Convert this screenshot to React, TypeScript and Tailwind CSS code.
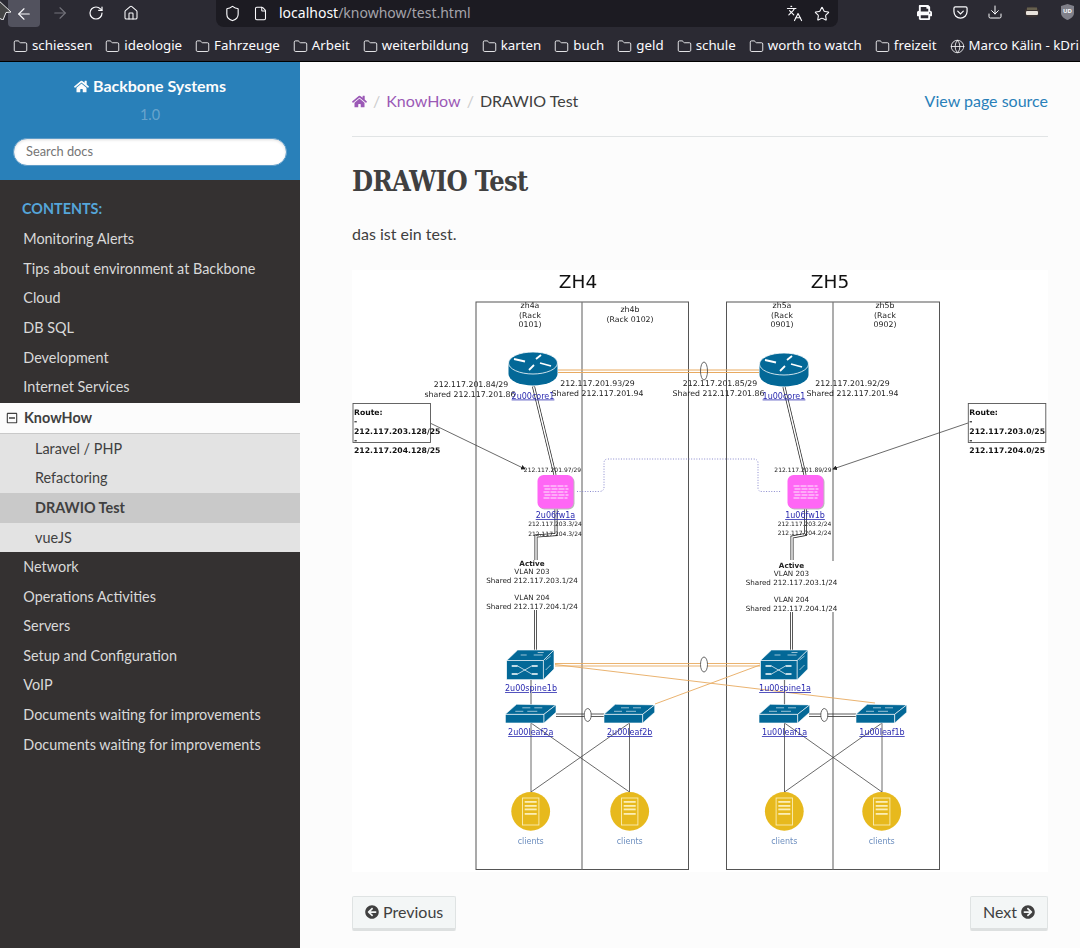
import React from "react"
import { ArrowLeft, ArrowRight, Download, File, Folder, Globe, Home, Languages, RotateCw, Shield, Star } from "lucide-react"
import { FaArrowCircleLeft, FaArrowCircleRight, FaHome, FaPrint, FaRegMinusSquare } from "react-icons/fa"

const bookmarks = ["schiessen", "ideologie", "Fahrzeuge", "Arbeit", "weiterbildung", "karten", "buch", "geld", "schule", "worth to watch", "freizeit"]

const menuTop = ["Monitoring Alerts", "Tips about environment at Backbone", "Cloud", "DB SQL", "Development", "Internet Services"]
const menuSub = ["Laravel / PHP", "Refactoring", "DRAWIO Test", "vueJS"]
const menuBottom = ["Network", "Operations Activities", "Servers", "Setup and Configuration", "VoIP", "Documents waiting for improvements", "Documents waiting for improvements"]

const BLUE = "#036897"
const LINE = "#555555"
const ORANGE = "#e8aa60"

function Label({ x, y, size = 7.8, bold, fill = "#222", children }: { x: number; y: number; size?: number; bold?: boolean; fill?: string; children: React.ReactNode }) {
  return (
    <text x={x} y={y} fontSize={size} fontWeight={bold ? 700 : 400} fill={fill} textAnchor="middle">
      {children}
    </text>
  )
}

function NodeLink({ x, y, size = 8, children }: { x: number; y: number; size?: number; children: React.ReactNode }) {
  return (
    <text x={x} y={y} fontSize={size} fill="#2a2ab0" textAnchor="middle" textDecoration="underline">
      {children}
    </text>
  )
}

function DoubleLine({ d, color = "#222" }: { d: string; color?: string }) {
  return (
    <g fill="none">
      <path d={d} stroke={color} strokeWidth={3} />
      <path d={d} stroke="#fff" strokeWidth={1.5} />
    </g>
  )
}

function Router({ cx, y }: { cx: number; y: number }) {
  const cy = y + 11
  return (
    <g>
      <path d={`M${cx - 24.5} ${cy} v11 a24.5 11.5 0 0 0 49 0 v-11 z`} fill={BLUE} />
      <ellipse cx={cx} cy={cy} rx={24.5} ry={11} fill={BLUE} stroke="#fff" strokeWidth={0.8} />
      <g stroke="#fff" strokeWidth={1.8} fill="#fff">
        <path d={`M${cx - 19} ${cy - 4} l11 2.5`} />
        <path d={`M${cx - 4} ${cy + 7} l5 -5`} />
        <path d={`M${cx + 18} ${cy + 3} l-11 -3`} />
        <path d={`M${cx + 8} ${cy - 8} l-5 4`} />
      </g>
    </g>
  )
}

function Firewall({ x, y }: { x: number; y: number }) {
  return (
    <g>
      <rect x={x + 1} y={y + 1} width={36} height={33.5} rx={6} fill="#bbbbbb" />
      <rect x={x} y={y} width={36} height={33.5} rx={6} fill="#ff66f5" />
      <g stroke="#fff" strokeWidth={0.9} strokeDasharray="6 1">
        {[11, 14, 17, 20, 23].map((dy, i) => (
          <path key={dy} d={`M${x + 6 + (i % 2)} ${y + dy} h24`} />
        ))}
      </g>
    </g>
  )
}

function Spine({ x, y }: { x: number; y: number }) {
  return (
    <g stroke="#fff" strokeWidth={0.6} fill={BLUE}>
      <path d={`M${x} ${y + 10.5} L${x + 11} ${y} H${x + 47.3} L${x + 36.7} ${y + 10.5} Z`} />
      <rect x={x} y={y + 10.5} width={36.7} height={19.2} />
      <path d={`M${x + 36.7} ${y + 10.5} L${x + 47.3} ${y} V${y + 19} L${x + 36.7} ${y + 29.7} Z`} />
      <path d={`M${x + 11} ${y + 16} l14 8 M${x + 11} ${y + 24} l14 -8`} fill="none" strokeWidth={0.7} />
      <path d={`M${x + 5} ${y + 16} h6 M${x + 25} ${y + 16} h6 M${x + 5} ${y + 24} h6 M${x + 25} ${y + 24} h6`} fill="none" strokeWidth={1.6} />
      <path d={`M${x + 14} ${y + 5} h6 M${x + 27} ${y + 5} h9 M${x + 31} ${y + 2.500} h6 M${x + 39} ${y + 10} l5 -4 M${x + 39} ${y + 20} l5 -5`} fill="none" />
    </g>
  )
}

function Leaf({ x, y }: { x: number; y: number }) {
  return (
    <g stroke="#fff" strokeWidth={0.6} fill={BLUE}>
      <path d={`M${x} ${y + 10} L${x + 11.3} ${y} L${x + 50.7} ${y + 0.6} L${x + 38.7} ${y + 10} Z`} />
      <rect x={x} y={y + 10} width={38.7} height={8.7} />
      <path d={`M${x + 38.7} ${y + 10} L${x + 50.7} ${y + 0.6} V${y + 8} L${x + 38.7} ${y + 18.7} Z`} />
      <path d={`M${x + 10} ${y + 7} h8 M${x + 22} ${y + 7} h10 M${x + 17} ${y + 3.5} h8 M${x + 29} ${y + 3.5} h8`} fill="none" />
    </g>
  )
}

function Client({ cx }: { cx: number }) {
  return (
    <g>
      <circle cx={cx} cy={811.3} r={19.4} fill="#e7b91d" />
      <rect x={cx - 8.2} y={798} width={16.4} height={27} fill="none" stroke="#fbeeb5" strokeWidth={0.9} />
      {[801, 805, 808.5, 813].map((y) => (
        <rect key={y} x={cx - 6} y={y} width={12} height={1.8} fill="#fbeeb5" />
      ))}
      <text x={cx} y={844} fontSize={8} fill="#6c8ebf" textAnchor="middle">clients</text>
    </g>
  )
}

function RouteBox({ x, lines }: { x: number; lines: string[] }) {
  return (
    <g>
      <rect x={x} y={403.5} width={77.5} height={39} fill="#fff" stroke={LINE} strokeWidth={0.9} />
      <g fontSize={7.7} fontWeight={700} fill="#111">
        <text x={x + 1} y={414.5}>Route:</text>
        <text x={x + 1} y={424}>-</text>
        <text x={x + 1} y={433.5}>{lines[0]}</text>
        <text x={x + 1} y={443}>-</text>
        <text x={x + 1} y={452.5}>{lines[1]}</text>
      </g>
    </g>
  )
}

function Diagram() {
  return (
    <svg viewBox="352 270 696 602" className="block h-[602px] w-[696px] bg-white font-['DejaVu_Sans',sans-serif] blur-[0.3px]">
      <defs>
        <marker id="arrow" markerWidth="6" markerHeight="6" refX="5" refY="3" orient="auto">
          <path d="M0 0 L6 3 L0 6 Z" fill="#222" />
        </marker>
      </defs>

      <Label x={578} y={288} size={18.5} fill="#111">ZH4</Label>
      <Label x={830} y={288} size={18.5} fill="#111">ZH5</Label>

      {/* racks */}
      <g fill="none" stroke={LINE} strokeWidth={1}>
        <rect x={476} y={302} width={212.5} height={567.5} />
        <rect x={726.5} y={302} width={213} height={567.5} />
        <path d="M582 302 V869.5 M833 302 V561 M833 612 V869.5" stroke="#777" strokeWidth={1.2} />
      </g>

      <Label x={530} y={308}>zh4a</Label>
      <Label x={530} y={317.5}>(Rack</Label>
      <Label x={530} y={327}>0101)</Label>
      <Label x={630} y={312}>zh4b</Label>
      <Label x={630} y={321.5}>(Rack 0102)</Label>
      <Label x={782} y={308}>zh5a</Label>
      <Label x={782} y={317.5}>(Rack</Label>
      <Label x={782} y={327}>0901)</Label>
      <Label x={885} y={308}>zh5b</Label>
      <Label x={885} y={317.5}>(Rack</Label>
      <Label x={885} y={327}>0902)</Label>

      {/* core links */}
      <path d="M558 370 H759 M558 372.5 H759" stroke={ORANGE} strokeWidth={1} fill="none" />
      <ellipse cx={704} cy={371} rx={3.5} ry={9} fill="none" stroke="#444" strokeWidth={0.8} />
      <DoubleLine d="M533.5 386.5 L555 475" />
      <DoubleLine d="M784 387 L805 475" />

      {/* route arrows */}
      <path d="M431 423.5 L525 469" stroke="#444" strokeWidth={0.8} markerEnd="url(#arrow)" />
      <path d="M968 423 L833 469" stroke="#444" strokeWidth={0.8} markerEnd="url(#arrow)" />

      {/* heartbeat */}
      <path d="M577 491.5 H599 Q604 491.5 604 487 V463 Q604 459 608 459 H753 Q758 459 758 463 V488 Q758 491.5 762 491.5 H781" fill="none" stroke="#7d7dc8" strokeWidth={0.9} strokeDasharray="1 1.6" />

      {/* fw down to spine */}
      <DoubleLine d="M556 508 V534.5 L536 536 V560" />
      <DoubleLine d="M805.5 508 V534.5 L792 537 V560" />
      <DoubleLine d="M535.5 610 V650" />
      <DoubleLine d="M791.5 612 V650" />

      <Router cx={533} y={352} />
      <Router cx={784} y={353} />
      <Firewall x={537.5} y={475} />
      <Firewall x={787.5} y={475} />

      <Label x={471} y={387}>212.117.201.84/29</Label>
      <Label x={470} y={397}>shared 212.117.201.86</Label>
      <Label x={597.5} y={386}>212.117.201.93/29</Label>
      <Label x={597.5} y={396}>Shared 212.117.201.94</Label>
      <Label x={720} y={386}>212.117.201.85/29</Label>
      <Label x={718.5} y={396}>Shared 212.117.201.86</Label>
      <Label x={852.5} y={386}>212.117.201.92/29</Label>
      <Label x={852.5} y={396}>Shared 212.117.201.94</Label>
      <NodeLink x={533} y={398.5}>2u00core1</NodeLink>
      <NodeLink x={784} y={398.5}>1u00core1</NodeLink>

      <RouteBox x={353} lines={["212.117.203.128/25", "212.117.204.128/25"]} />
      <RouteBox x={968.3} lines={["212.117.203.0/25", "212.117.204.0/25"]} />

      <Label x={552.5} y={471.5} size={6}>212.117.201.97/29</Label>
      <Label x={803} y={471.5} size={6}>212.117.201.89/29</Label>
      <NodeLink x={555.5} y={518}>2u06fw1a</NodeLink>
      <NodeLink x={805} y={518}>1u06fw1b</NodeLink>
      <Label x={555} y={526} size={6}>212.117.203.3/24</Label>
      <Label x={555} y={535.7} size={6}>212.117.204.3/24</Label>
      <Label x={804.5} y={525.7} size={6}>212.117.203.2/24</Label>
      <Label x={804.5} y={535.2} size={6}>212.117.204.2/24</Label>

      <Label x={532} y={565.5} size={7.2} bold>Active</Label>
      <Label x={532} y={574} size={7.2}>VLAN 203</Label>
      <Label x={532} y={582.5} size={7.2}>Shared 212.117.203.1/24</Label>
      <Label x={532} y={600} size={7.2}>VLAN 204</Label>
      <Label x={532} y={608.5} size={7.2}>Shared 212.117.204.1/24</Label>
      <Label x={791.5} y={567.5} size={7.2} bold>Active</Label>
      <Label x={791.5} y={576} size={7.2}>VLAN 203</Label>
      <Label x={791.5} y={584.5} size={7.2}>Shared 212.117.203.1/24</Label>
      <Label x={791.5} y={602} size={7.2}>VLAN 204</Label>
      <Label x={791.5} y={610.5} size={7.2}>Shared 212.117.204.1/24</Label>

      {/* cross links to clients */}
      <path d="M531 680 V705 M784.5 680 V705" stroke="#777" strokeWidth={1.2} />
      <path d="M531 723 V792 M629.5 723 V792 M531 723 L629.5 792 M629.5 723 L531 792 M784.5 723 V792 M882 723 V792 M784.5 723 L882 792 M882 723 L784.5 792" stroke="#444" strokeWidth={0.8} fill="none" />
      <path d="M556 714 H604 M556 716.5 H604 M809 714 H856 M809 716.5 H856" stroke="#333" strokeWidth={0.8} />
      <ellipse cx={587.7} cy={715} rx={3.5} ry={6.5} fill="#fff" stroke="#444" strokeWidth={0.8} />
      <ellipse cx={824.3} cy={715} rx={3.5} ry={6.5} fill="#fff" stroke="#444" strokeWidth={0.8} />

      {/* orange uplinks */}
      <path d="M555 663.5 H760 M555 666 H760 M555 664.5 L875 703 M655 704 L760 665" stroke={ORANGE} strokeWidth={0.9} fill="none" />
      <ellipse cx={704} cy={664.5} rx={3.5} ry={7.5} fill="#fff" stroke="#444" strokeWidth={0.8} />

      <Spine x={506.7} y={650} />
      <Spine x={760.5} y={650} />
      <Leaf x={505.3} y={704.3} />
      <Leaf x={604} y={704.3} />
      <Leaf x={759} y={704.3} />
      <Leaf x={856} y={704.3} />

      <NodeLink x={531} y={691}>2u00spine1b</NodeLink>
      <NodeLink x={785} y={691}>1u00spine1a</NodeLink>
      <NodeLink x={530.7} y={735}>2u00leaf2a</NodeLink>
      <NodeLink x={629.7} y={735}>2u00leaf2b</NodeLink>
      <NodeLink x={784.5} y={735}>1u00leaf1a</NodeLink>
      <NodeLink x={882} y={735}>1u00leaf1b</NodeLink>

      <Client cx={530.7} />
      <Client cx={629.7} />
      <Client cx={784.3} />
      <Client cx={881.7} />
    </svg>
  )
}

function BrowserChrome() {
  return (
    <div className="h-[62px] shrink-0 overflow-hidden border-b border-black bg-[#2b2a33] font-['Noto_Sans',sans-serif] text-[#fbfbfe]">
      <div className="flex h-[31px]">
        <div className="flex items-start">
          <div className="ml-2 flex h-[27px] w-8 items-center justify-center rounded-b bg-[#52525e]">
            <ArrowLeft size={18} strokeWidth={1.5} />
          </div>
          <ArrowRight size={18} strokeWidth={1.5} className="ml-[11px] mt-[4px] text-[#74737c]" />
          <RotateCw size={16} strokeWidth={1.8} className="ml-[19px] mt-[5px]" />
          <Home size={16} strokeWidth={1.6} className="ml-[19px] mt-[5px]" />
        </div>
        <div className="ml-[77px] flex h-[27px] w-[622px] items-center rounded-b-lg bg-[#1c1b22] pl-2 pr-2">
          <Shield size={17} strokeWidth={1.6} />
          <File size={15} strokeWidth={1.7} className="ml-[12px]" />
          <div className="ml-[11px] -mt-px flex-1 text-[14px] leading-none">
            localhost<span className="text-[#a4a3aa]">/knowhow/test.html</span>
          </div>
          <Languages size={17} strokeWidth={1.6} />
          <Star size={16} strokeWidth={1.6} className="ml-[11px]" />
        </div>
        <div className="ml-[79px] flex items-start pt-[4px]">
          <FaPrint size={15} className="mt-[1px]" />
          <svg viewBox="0 0 16 16" className="ml-[21px] mt-[1px] h-[15px] w-[15px]" fill="none" stroke="currentColor" strokeWidth={1.3}>
            <path d="M2.5 2h11A1.5 1.5 0 0 1 15 3.5V7a7 7 0 0 1-14 0V3.5A1.5 1.5 0 0 1 2.5 2Z" />
            <path d="M5 6.5 8 9.5 11 6.5" strokeLinecap="round" />
          </svg>
          <Download size={16} strokeWidth={1.5} className="ml-[19px]" />
          <svg viewBox="0 0 16 12" className="ml-[21px] mt-[2px] h-[12px] w-[16px]">
            <ellipse cx="8" cy="6" rx="7.5" ry="5.5" fill="#3a3232" />
            <rect x="2" y="5" width="12" height="4" rx="1" fill="#e8e2dc" />
            <rect x="3" y="1.5" width="10" height="2.5" fill="#66604e" />
          </svg>
          <div className="relative ml-[21px] h-[16px] w-[13px]">
            <svg viewBox="0 0 13 16" className="h-[16px] w-[13px]">
              <path d="M6.5 0 13 2v7c0 3.5-3 5.5-6.5 7C3 14.500 0 12.500 0 9V2Z" fill="#80808a" />
            </svg>
            <span className="absolute left-[2px] top-[4px] text-[6px] font-bold leading-[7px]">UD</span>
          </div>
        </div>
      </div>
      <div className="flex h-[30px] items-center overflow-hidden whitespace-nowrap pl-[13px] text-[13.3px]">
        {bookmarks.map((name) => (
          <div key={name} className="mr-[13px] flex items-center">
            <Folder size={15} strokeWidth={1.4} />
            <span className="ml-[4px] leading-none">{name}</span>
          </div>
        ))}
        <Globe size={15} strokeWidth={1.3} className="shrink-0" />
        <span className="ml-[4px] leading-none">Marco Kälin - kDri</span>
      </div>
    </div>
  )
}

function Sidebar() {
  return (
    <div className="flex w-[300px] shrink-0 flex-col bg-[#343131] text-[14.4px]">
      <div className="h-[118px] bg-[#2980b9] px-[13px] pt-[14px] text-center">
        <div className="flex items-center justify-center text-[16px] font-bold leading-5 text-[#fcfcfc]">
          <FaHome size={15} className="mr-[4px]" />
          Backbone Systems
        </div>
        <div className="mt-[9px] text-[14.4px] leading-5 text-white/30">1.0</div>
        <div className="mt-[13px] flex h-[28px] w-[274px] items-center rounded-full border border-[#5e9cc8] bg-white pl-3 text-[12.8px] text-[#757575] shadow-[inset_0_1px_3px_#ddd]">
          Search docs
        </div>
      </div>
      <div className="mt-[19.500px] h-[18px] pl-[22px] font-bold uppercase leading-[18px] text-[#55a5d9]">Contents:</div>
      <div className="mt-[6.500px]">
        {menuTop.map((item) => (
          <div key={item} className="h-[29.65px] pl-[23.3px] leading-[29.65px] text-[#d9d9d9]">{item}</div>
        ))}
      </div>
      <div className="mt-[1px] flex h-[31px] items-center border-b border-[#c9c9c9] bg-[#fcfcfc] pl-[6px] font-bold text-[#404040]">
        <FaRegMinusSquare size={12} className="mr-[6px]" />
        KnowHow
      </div>
      <div className="bg-[#e3e3e3] text-[#404040]">
        {menuSub.map((item) => (
          <div key={item} className={item === "DRAWIO Test" ? "h-[29.65px] bg-[#c9c9c9] pl-[35px] font-bold leading-[29.65px]" : "h-[29.65px] pl-[35px] leading-[29.65px]"}>
            {item}
          </div>
        ))}
      </div>
      <div className="-mt-[0.5px]">
        {menuBottom.map((item, i) => (
          <div key={i} className="h-[29.65px] pl-[23.3px] leading-[29.65px] text-[#d9d9d9]">{item}</div>
        ))}
      </div>
    </div>
  )
}

export default function App() {
  return (
    <div className="relative flex h-[948px] w-[1080px] flex-col overflow-hidden bg-[#fcfcfc] font-['Lato',sans-serif]">
      <BrowserChrome />
      <div className="flex min-h-0 flex-1">
        <Sidebar />
        <div className="min-w-0 flex-1 pl-[52px] pr-[32px] text-[#404040]">
          {/* breadcrumbs */}
          <div className="mt-[29px] flex h-5 items-center text-[16px] leading-5">
            <FaHome size={15} className="text-[#9b59b6]" />
            <span className="mx-[6px] text-[#ccc]">/</span>
            <span className="text-[#9b59b6]">KnowHow</span>
            <span className="mx-[6px] text-[#ccc]">/</span>
            <span>DRAWIO Test</span>
            <span className="ml-auto text-[#2980b9]">View page source</span>
          </div>
          <div className="mt-[25px] h-px bg-[#e1e4e5]" />
          <h1 className="mt-[27px] font-['DejaVu_Serif_Condensed','DejaVu_Serif',serif] text-[27px] font-bold leading-9 tracking-[-0.6px]">DRAWIO Test</h1>
          <p className="mt-[22px] text-[16px] leading-6">das ist ein test.</p>
          <div className="mt-[24px]">
            <Diagram />
          </div>
          <div className="mt-[24px] flex justify-between text-[16px]">
            <div className="flex h-[35px] items-center gap-[4px] rounded-[2px] border border-[#dfe3e3] border-b-[3px] border-b-[#dde0e0] bg-[#f3f6f6] px-3 pb-[2px]">
              <FaArrowCircleLeft size={14} />
              Previous
            </div>
            <div className="flex h-[35px] items-center gap-[4px] rounded-[2px] border border-[#dfe3e3] border-b-[3px] border-b-[#dde0e0] bg-[#f3f6f6] px-3 pb-[2px]">
              Next
              <FaArrowCircleRight size={14} />
            </div>
          </div>
        </div>
      </div>
      {/* mouse pointer */}
      <svg viewBox="0 0 11 20" className="absolute left-0 top-0 h-5 w-[11px]">
        <path d="M-3 -1 L11 12 L6 12.500 L3 20 L-3 17 Z" fill="#444" stroke="#eee" strokeWidth={1} />
      </svg>
    </div>
  )
}
